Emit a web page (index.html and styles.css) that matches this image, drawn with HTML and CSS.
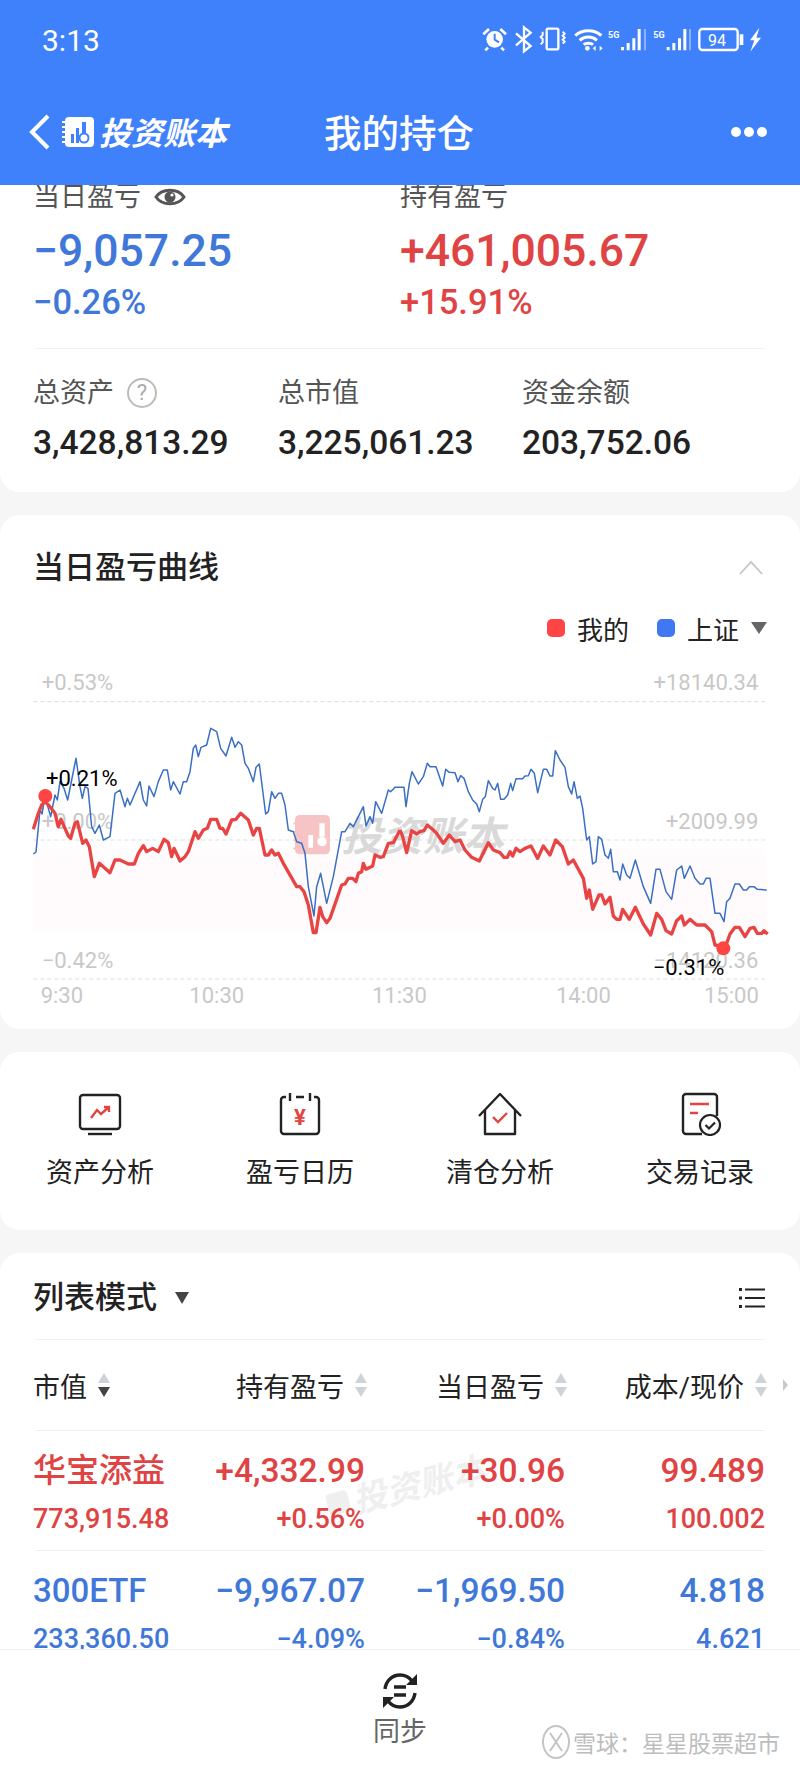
FILE: index.html
```html
<!DOCTYPE html>
<html lang="zh">
<head>
<meta charset="utf-8">
<title>我的持仓</title>
<link rel="stylesheet" href="styles.css">
</head>
<body>
<div class="page">
  <header class="top">
    <div class="status">
      <span class="clock">3:13</span>
      <svg class="status-icons" viewBox="0 0 900 150" width="300" height="50">
        <g fill="none" stroke="#fff">
          <circle cx="74" cy="73" r="25" fill="#fff" stroke="none"/>
          <path d="M74 56v18l13 8" stroke="#3f80fb" stroke-width="6"/>
          <path d="M40 58l17-16M108 58L91 42M54 98l-8 8M94 98l8 8" stroke-width="8"/>
          <path d="M138 55l44 38-20 16V37l20 16-44 38" stroke-width="7"/>
          <rect x="230" y="41" width="35" height="62" rx="4" stroke-width="7"/>
          <path d="M218 50v10l-6 6 6 6v10l-6 6M278 50l6 6-6 6 6 6-6 6 6 6 -6 6" stroke-width="6"/>
          <path d="M316 62c20-20 58-20 78 0M329 76c14-13 38-13 52 0M341 89c7-6 21-6 28 0" stroke-width="9"/>
          <rect x="688" y="42" width="115" height="63" rx="9" stroke-width="7"/>
        </g>
        <g fill="#fff">
          <circle cx="352" cy="100" r="7"/>
          <path d="M368 100l9-8v16zM398 100l-9-8v16z"/>
          <path d="M453 96h9v10h-9zM470 84h9v22h-9zM487 70h9v36h-9zM503 42h9v64h-9z"/>
          <path d="M590 96h9v10h-9zM607 84h9v22h-9zM624 70h9v36h-9zM640 42h9v64h-9z"/>
          <path d="M809 58h11v32h-11zM868 38l-28 38h13l-12 34 32-42h-14z"/>
        </g>
        <path d="M525 42v64M660 42v64" stroke="#9dbcf8" stroke-width="5"/>
        <text x="414" y="68" class="st-5g">5G</text>
        <text x="550" y="68" class="st-5g">5G</text>
        <text x="714" y="92" class="st-batt">94</text>
      </svg>
    </div>
    <nav class="nav">
      <svg class="back" viewBox="0 0 22 36" width="22" height="36"><path d="M19 2L3 18l16 16" fill="none" stroke="#fff" stroke-width="4"/></svg>
      <svg class="brand-icon" viewBox="0 0 32 32" width="32" height="32">
        <rect x="3" y="1" width="29" height="30" rx="4" fill="#fff"/>
        <path d="M0 6h6M0 11h6M0 16h6M0 21h6M0 26h6" stroke="#fff" stroke-width="2"/>
        <path d="M9 18h3v9H9zM14 12h3v15h-3z" fill="#3f80fb"/>
        <path d="M20 6h4v12h-4z" fill="#3f80fb"/>
        <circle cx="22" cy="22" r="4.500" fill="none" stroke="#3f80fb" stroke-width="2"/>
      </svg>
      <span class="brand">投资账本</span>
      <span class="title">我的持仓</span>
      <span class="dots"><i></i><i></i><i></i></span>
    </nav>
  </header>

  <main class="scroll">
    <section class="card summary">
      <div class="sum-top">
        <div>
          <div class="lbl">当日盈亏
            <svg class="eye" viewBox="0 0 32 24" width="32" height="24"><path d="M2 12C8 3 24 3 30 12 24 21 8 21 2 12z" fill="none" stroke="#555" stroke-width="3"/><circle cx="16" cy="12" r="5.500" fill="#555"/><circle cx="18" cy="10" r="1.600" fill="#fff"/></svg>
          </div>
          <div class="big blue">−9,057.25</div>
          <div class="pct blue">−0.26%</div>
        </div>
        <div>
          <div class="lbl">持有盈亏</div>
          <div class="big red">+461,005.67</div>
          <div class="pct red">+15.91%</div>
        </div>
      </div>
      <div class="sum-bottom">
        <div>
          <div class="lbl">总资产 <span class="help">?</span></div>
          <div class="num">3,428,813.29</div>
        </div>
        <div>
          <div class="lbl">总市值</div>
          <div class="num">3,225,061.23</div>
        </div>
        <div>
          <div class="lbl">资金余额</div>
          <div class="num">203,752.06</div>
        </div>
      </div>
    </section>

    <section class="card curve">
      <div class="curve-head">
        <h2 class="card-title">当日盈亏曲线</h2>
        <svg viewBox="0 0 24 14" width="24" height="14"><path d="M1 13L12 1l11 12" fill="none" stroke="#c4c4c4" stroke-width="1.800"/></svg>
      </div>
      <div class="legend">
        <i class="sw sw-red"></i><span>我的</span>
        <i class="sw sw-blue"></i><span>上证</span>
        <i class="tri"></i>
      </div>
      <svg class="chart" viewBox="0 0 2400 1080" width="800" height="360">
        <defs>
          <linearGradient id="tint" x1="0" y1="0" x2="0" y2="1">
            <stop offset="0" stop-color="#fffbfc" stop-opacity="0"/>
            <stop offset="0.25" stop-color="#fffbfc"/>
            <stop offset="0.9" stop-color="#fffbfc"/>
            <stop offset="1" stop-color="#fffbfc" stop-opacity="0"/>
          </linearGradient>
        </defs>
        <path d="M100 125H2295M100 540H2295M100 957H2295" stroke="#dcdcdc" stroke-width="3" stroke-dasharray="12 9" fill="none"/>
        <g class="axis">
          <text x="125" y="90">+0.53%</text>
          <text x="125" y="506">+0.00%</text>
          <text x="125" y="923">−0.42%</text>
          <text x="2275" y="90" text-anchor="end">+18140.34</text>
          <text x="2275" y="506" text-anchor="end">+2009.99</text>
          <text x="2275" y="923" text-anchor="end">−14120.36</text>
          <text x="122" y="1028">9:30</text>
          <text x="568" y="1028">10:30</text>
          <text x="1116" y="1028">11:30</text>
          <text x="1668" y="1028">14:00</text>
          <text x="2112" y="1028">15:00</text>
        </g>
        <rect x="100" y="530" width="2200" height="300" fill="url(#tint)"/>
        <rect x="885" y="465" width="105" height="118" rx="14" fill="#f7c4c6"/>
        <path d="M880 490h24M880 515h24M880 540h24M880 565h24" stroke="#f7c4c6" stroke-width="5"/>
        <path d="M925 525h14v38h-14zM958 490h16v40h-16z" fill="#fff"/>
        <circle cx="966" cy="545" r="14" fill="#fff"/>
        <text x="1024" y="572" class="mark">投资账本</text>
        <g fill="none" stroke-linejoin="round">
          <polyline stroke="#3a6fc4" stroke-width="4.500" points="100,582 108,576 120,450 126,462 135,410 152,470 165,405 172,420 180,365 192,385 203,420 215,360 228,295 240,380 247,415 255,380 264,385 275,500 285,520 298,495 310,540 330,530 345,400 360,390 375,440 382,415 390,435 420,365 430,420 440,438 447,378 462,410 475,365 490,330 502,330 512,390 520,365 540,402 550,365 560,365 570,335 580,265 587,255 595,290 603,262 620,255 632,205 650,215 662,265 678,288 695,232 705,262 715,245 725,255 735,310 745,325 760,365 768,322 778,312 797,462 805,455 815,395 825,415 835,400 845,400 855,435 865,510 880,515 890,545 905,550 915,580 925,680 942,768 950,680 962,640 980,730 1000,650 1025,515 1035,515 1050,490 1060,500 1090,440 1098,498 1110,470 1118,490 1127,425 1145,460 1165,390 1172,395 1185,382 1200,382"/>
          <polyline transform="translate(1200 0)" stroke="#3a6fc4" stroke-width="4.500" points="0,382 12,382 18,440 28,370 36,335 55,372 70,350 82,310 90,320 108,320 128,378 137,328 148,337 165,338 174,365 182,347 192,355 205,395 218,420 230,432 238,455 248,418 256,410 265,362 278,385 285,390 293,370 302,418 312,418 323,405 332,370 338,392 348,356 368,356 375,348 385,347 393,328 403,340 413,398 430,328 440,328 450,348 458,348 466,272 480,300 495,322 505,380 515,402 522,365 532,415 540,408 548,445 560,540 568,530 578,612 588,605 595,530 605,538 615,585 625,595 632,568 640,635 652,635 660,660 668,612 680,645 690,655 706,600 730,680 752,730 768,628 780,628 798,695 815,718 830,630 845,618 853,655 870,618 885,655 900,672 910,672 918,655 930,655 945,760 960,760 972,785 980,725 990,715 1005,672 1018,672 1030,690 1040,690 1048,680 1062,680 1072,688 1100,690"/>
          <polyline stroke="#e84444" stroke-width="10" points="100,508 115,460 125,435 135,425 150,440 165,460 175,500 183,478 205,528 212,535 225,490 232,485 248,550 258,540 268,560 283,650 298,610 330,638 345,600 360,600 385,612 403,612 415,580 430,557 440,575 458,565 475,575 492,538 505,548 515,590 522,565 540,603 555,590 565,575 585,515 595,535 610,510 622,505 632,478 650,478 660,505 668,505 678,522 695,480 708,478 722,460 745,480 760,525 770,505 778,505 795,585 805,585 815,570 825,585 835,580 850,610 890,680 900,680 912,695 925,735 940,818 948,818 960,742 968,770 980,788 990,775 1025,675 1035,672 1045,655 1058,655 1068,665 1075,640 1085,635 1090,610 1098,628 1118,618 1125,585 1140,592 1150,590 1165,550 1180,548 1200,510"/>
          <polyline transform="translate(1200 0)" stroke="#e84444" stroke-width="10" points="0,510 8,530 20,578 35,512 50,522 60,515 72,512 82,495 100,510 110,520 130,550 148,525 165,545 180,540 195,570 215,592 238,603 265,548 280,570 300,578 312,592 322,592 330,575 338,588 348,565 360,575 375,565 393,558 413,595 430,558 450,585 467,540 487,560 505,612 520,600 550,655 560,715 568,690 578,748 597,705 605,705 615,732 630,712 640,768 650,778 660,778 668,748 688,778 706,742 730,792 752,825 770,760 785,778 798,812 815,822 830,782 845,768 853,795 870,778 890,795 915,795 935,815 945,855 970,860 980,850 990,822 1005,802 1018,802 1035,830 1050,805 1062,802 1072,820 1085,820 1092,812 1103,822"/>
        </g>
        <circle cx="136" cy="408" r="21" fill="#f44"/>
        <circle cx="2170" cy="865" r="21" fill="#f44"/>
        <g class="tag">
          <text x="138" y="378">+0.21%</text>
          <text x="1958" y="946">−0.31%</text>
        </g>
      </svg>
    </section>

    <section class="card tools">
      <div class="tool">
        <svg viewBox="0 0 44 44" width="44" height="44"><rect x="2" y="3" width="40" height="34" rx="3" fill="none" stroke="#222" stroke-width="2.400"/><path d="M10 42h24" stroke="#222" stroke-width="2.400"/><path d="M13 26l6-8 4 4 8-7M26 15h5v5" fill="none" stroke="#e2453f" stroke-width="2.400"/></svg>
        <span>资产分析</span>
      </div>
      <div class="tool">
        <svg viewBox="0 0 44 44" width="44" height="44"><path d="M8 5H6a3 3 0 0 0-3 3v31a3 3 0 0 0 3 3h32a3 3 0 0 0 3-3V8a3 3 0 0 0-3-3h-2M12 1v8M32 1v8M18 5h8" fill="none" stroke="#222" stroke-width="2.400"/><text x="22" y="33" class="yen">¥</text></svg>
        <span>盈亏日历</span>
      </div>
      <div class="tool">
        <svg viewBox="0 0 44 44" width="44" height="44"><path d="M1 24L22 2l21 22M7 18v24h30V18" fill="none" stroke="#222" stroke-width="2.400" stroke-linejoin="round"/><path d="M15 25l5 5 9-9" fill="none" stroke="#e2453f" stroke-width="2.400"/></svg>
        <span>清仓分析</span>
      </div>
      <div class="tool">
        <svg viewBox="0 0 44 44" width="44" height="44"><path d="M24 42H8a3 3 0 0 1-3-3V5a3 3 0 0 1 3-3h28a3 3 0 0 1 3 3v19" fill="none" stroke="#222" stroke-width="2.400"/><path d="M12 12h19M12 21h8" stroke="#e2453f" stroke-width="2.400"/><circle cx="32" cy="33" r="10" fill="#fff" stroke="#222" stroke-width="2.200"/><path d="M27.500 33l3.500 3.500 6-6" fill="none" stroke="#222" stroke-width="2.200"/></svg>
        <span>交易记录</span>
      </div>
    </section>

    <section class="card holdings">
      <div class="list-head">
        <h2 class="card-title">列表模式</h2>
        <i class="tri tri-dark"></i>
        <svg class="list-icon" viewBox="0 0 26 20" width="26" height="20"><path d="M6 1.500h20M6 10h20M6 18.500h20" stroke="#222" stroke-width="2"/><path d="M0 0h3v3H0zM0 8.500h3v3H0zM0 17h3v3H0z" fill="#222"/></svg>
      </div>
      <div class="grid cols">
        <div class="col col-first">市值<span class="sort sort-down"></span></div>
        <div class="col">持有盈亏<span class="sort"></span></div>
        <div class="col">当日盈亏<span class="sort"></span></div>
        <div class="col">成本/现价<span class="sort"></span></div>
        <i class="more"></i>
      </div>
      <div class="grid row red">
        <span class="ghost">投资账本</span>
        <div class="name">华宝添益</div><div class="v">+4,332.99</div><div class="v">+30.96</div><div class="v">99.489</div>
        <div class="sub left">773,915.48</div><div class="sub">+0.56%</div><div class="sub">+0.00%</div><div class="sub">100.002</div>
      </div>
      <div class="grid row blue">
        <div class="name">300ETF</div><div class="v">−9,967.07</div><div class="v">−1,969.50</div><div class="v">4.818</div>
        <div class="sub left">233,360.50</div><div class="sub">−4.09%</div><div class="sub">−0.84%</div><div class="sub">4.621</div>
      </div>
    </section>
  </main>

  <footer class="bar">
    <svg viewBox="0 0 36 36" width="36" height="36">
      <path d="M3 16C4 8 10 2 18 2c5 0 9 2 12 6M33 20c-1 8-7 14-15 14-5 0-9-2-12-6" fill="none" stroke="#222" stroke-width="3.400"/>
      <path d="M35 1v11H24zM1 35V24h11z" fill="#222"/>
      <path d="M12 14h12M12 22h12" stroke="#222" stroke-width="3.400"/>
    </svg>
    <span>同步</span>
    <div class="xq">
      <svg viewBox="0 0 28 36" width="28" height="36"><path d="M14 2a13 16 0 1 0 0 32 13 16 0 1 0 0-32zM8 9l12 18M20 9L8 27" fill="none" stroke="#c4c4c4" stroke-width="2"/></svg>
      <span>雪球：星星股票超市</span>
    </div>
  </footer>
</div>
</body>
</html>
```
FILE: styles.css
```css
* { box-sizing: border-box; }
html, body { margin: 0; padding: 0; }
body { font-family: Roboto, "Noto Sans CJK SC", sans-serif; color: #222; background: #f6f6f6; }
.page { width: 800px; height: 1769px; display: flex; flex-direction: column; overflow: hidden; }

.top { height: 185px; background: #3f80fb; color: #fff; position: relative; z-index: 2; flex: none; }
.status { height: 80px; display: flex; align-items: center; justify-content: space-between; padding: 0 30px 0 42px; }
.clock { font-size: 30px; font-weight: 400; }
.status-icons { display: block; }
.st-5g { font-size: 27px; font-weight: 700; fill: #fff; }
.st-batt { font-size: 48px; fill: #fff; }
.nav { height: 105px; display: flex; align-items: center; padding: 0 33px 2px 29px; }
.back { flex: none; }
.brand-icon { flex: none; margin-left: 11px; }
.brand { font-size: 32px; font-weight: 700; font-style: italic; margin-left: 5px; width: 128px; margin-bottom: 2px; white-space: nowrap; }
.title { font-size: 37.500px; font-weight: 500; margin-left: 97px; margin-bottom: 2px; }
.dots { margin-left: auto; display: flex; gap: 3px; }
.dots i { width: 10px; height: 10px; border-radius: 50%; background: #fff; }

.scroll { flex: 1; min-height: 0; overflow: hidden; display: flex; flex-direction: column; gap: 23px; }
.card { background: #fff; border-radius: 20px; flex: none; }

.summary { padding: 0 35px 24px 33px; border-radius: 0 0 20px 20px; }
.sum-top { display: grid; grid-template-columns: 367px 1fr; margin-top: -6px; }
.lbl { font-size: 27px; line-height: 36px; color: #555; display: flex; align-items: center; }
.eye { margin-left: 13px; }
.big { font-size: 44.500px; font-weight: 500; line-height: 60px; margin-top: 6px; }
.pct { font-size: 34.500px; font-weight: 500; line-height: 40px; margin-top: 1px; }
.blue { color: #3f78d8; }
.red { color: #e04343; }
.sum-bottom { display: grid; grid-template-columns: 243px 244px 1fr; border-top: 1px solid #f0f0f0; margin: 26px 0 0 2px; padding-top: 26px; }
.sum-bottom > div:first-child { margin-left: -2px; }
.help { width: 30px; height: 30px; border: 2px solid #bbb; border-radius: 50%; color: #aaa; font-size: 22px; line-height: 26px; text-align: center; margin-left: 13px; }
.num { font-size: 33.500px; font-weight: 500; line-height: 50px; margin-top: 7px; white-space: nowrap; }

.curve { padding: 33px 0 9px; }
.curve-head { display: flex; align-items: center; justify-content: space-between; padding: 0 37px 0 33px; }
.card-title { font-size: 31px; line-height: 40px; font-weight: 500; margin: 0; }
.legend { display: flex; align-items: center; justify-content: flex-end; height: 40px; margin-top: 20px; padding-right: 33px; font-size: 26px; }
.sw { width: 18px; height: 18px; border-radius: 5px; margin-right: 12px; }
.sw-red { background: #f44; }
.sw-blue { background: #3f78f0; margin-left: 28px; }
.tri { width: 0; height: 0; border-left: 8px solid transparent; border-right: 8px solid transparent; border-top: 12px solid #666; margin-left: 12px; }
.chart { display: block; margin-top: 12px; }
.axis text { font-size: 66px; fill: #c8c8c8; }
.mark { font-size: 122px; font-weight: 700; font-style: italic; fill: #d9d9d9; }
.tag text { font-size: 66px; fill: #000; }
.yen { font-size: 22px; font-weight: 700; fill: #e2453f; text-anchor: middle; }

.tools { padding: 40px 0 0; height: 178px; display: grid; grid-template-columns: repeat(4, 200px); }
.tool { display: flex; flex-direction: column; align-items: center; }
.tool span { font-size: 27px; line-height: 36px; margin-top: 19px; }

.holdings { padding: 25px 35px 0; position: relative; border-radius: 20px 20px 0 0; flex: 1; }
.list-head { display: flex; align-items: center; height: 40px; margin-bottom: 21px; }
.list-head .card-title { margin-left: -2px; }
.tri-dark { border-top-color: #444; border-left-width: 7px; border-right-width: 7px; margin-left: 18px; }
.list-icon { margin-left: auto; }
.grid { display: grid; grid-template-columns: 130px 200px 200px 200px; border-top: 1px solid #f0f0f0; position: relative; }
.cols { height: 91px; align-items: center; font-size: 27px; }
.col { display: flex; align-items: center; justify-content: flex-end; white-space: nowrap; }
.col-first { justify-content: flex-start; margin-left: -2px; }
.sort { width: 12px; height: 24px; margin-left: 11px; margin-right: -2px; position: relative; flex: none; }
.sort::before, .sort::after { content: ""; position: absolute; left: 0; border-left: 6px solid transparent; border-right: 6px solid transparent; }
.sort::before { top: 0; border-bottom: 10px solid #cdd3d7; }
.sort::after { bottom: 0; border-top: 10px solid #cdd3d7; }
.sort-down::after { border-top-color: #444; }
.more { position: absolute; left: 748px; top: 39px; border-left: 5px solid #c8c8c8; border-top: 6px solid transparent; border-bottom: 6px solid transparent; }
.row { padding: 18px 0 11px; row-gap: 6px; }
.name { font-size: 33px; font-weight: 500; line-height: 44px; white-space: nowrap; margin-left: -2px; }
.v { font-size: 33.500px; font-weight: 500; line-height: 44px; text-align: right; }
.sub { font-size: 27px; font-weight: 500; line-height: 40px; text-align: right; }
.sub.left { text-align: left; margin-left: -2px; }
.ghost { position: absolute; left: 290px; top: 30px; font-size: 34px; font-weight: 700; font-style: italic; color: #efefef; transform: rotate(-14deg); white-space: nowrap; display: flex; align-items: center; gap: 4px; }
.ghost::before { content: ""; width: 22px; height: 22px; border-radius: 4px; background: #efefef; }
.name, .v, .sub { position: relative; }

.bar { height: 120px; flex: none; background: #fff; border-top: 1px solid #eee; position: relative; display: flex; flex-direction: column; align-items: center; padding-top: 23px; z-index: 2; }
.bar > span { font-size: 27px; line-height: 36px; color: #666; margin-top: 5px; }
.xq { position: absolute; left: 542px; top: 74px; width: 240px; display: flex; align-items: center; gap: 3px; color: #bdbdbd; font-size: 23px; white-space: nowrap; }
```
